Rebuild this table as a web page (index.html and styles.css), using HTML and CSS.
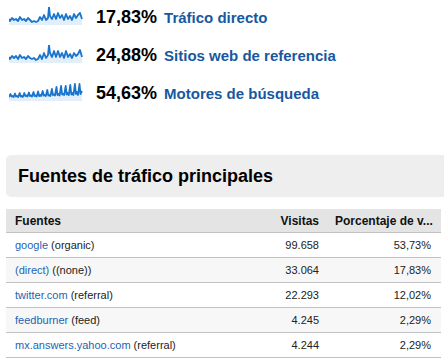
FILE: index.html
```html
<!DOCTYPE html>
<html lang="es">
<head>
<meta charset="utf-8">
<title>Fuentes de tráfico</title>
<link rel="stylesheet" href="styles.css">
</head>
<body>
<div class="summary">
  <div class="srow">
    <svg class="spark" width="74" height="18" viewBox="0 0 74 18">
      <polygon class="fill" points="0,12 1,14 3,11 5,13 7,12 9,14 11,10 13,13 15,12 17,14 19,11 21,13 23,15 25,14 27,15 29,14 31,10 33,13 35,8 37,13 39,11 40,0 41,9 43,12 45,7 47,12 49,6 51,11 53,8 55,13 57,7 59,12 61,9 63,13 65,7 67,11 69,8 71,6 73,12 73,18 0,18"/>
      <polyline class="line" points="0,12 1,14 3,11 5,13 7,12 9,14 11,10 13,13 15,12 17,14 19,11 21,13 23,15 25,14 27,15 29,14 31,10 33,13 35,8 37,13 39,11 40,0 41,9 43,12 45,7 47,12 49,6 51,11 53,8 55,13 57,7 59,12 61,9 63,13 65,7 67,11 69,8 71,6 73,12"/>
    </svg>
    <span class="pct">17,83%</span>
    <a class="label" href="#">Tráfico directo</a>
  </div>
  <div class="srow">
    <svg class="spark" width="74" height="18" viewBox="0 0 74 18">
      <polygon class="fill" points="0,12 1,14 3,11 5,13 7,11 9,14 11,10 13,13 15,12 17,14 19,11 21,13 23,14 25,13 27,15 29,14 31,10 33,14 35,8 37,13 39,10 40,0 41,8 43,12 45,6 47,12 49,6 51,12 53,8 55,13 57,6 59,12 61,9 63,13 65,8 67,11 69,9 71,5 73,12 73,18 0,18"/>
      <polyline class="line" points="0,12 1,14 3,11 5,13 7,11 9,14 11,10 13,13 15,12 17,14 19,11 21,13 23,14 25,13 27,15 29,14 31,10 33,14 35,8 37,13 39,10 40,0 41,8 43,12 45,6 47,12 49,6 51,12 53,8 55,13 57,6 59,12 61,9 63,13 65,8 67,11 69,9 71,5 73,12"/>
    </svg>
    <span class="pct">24,88%</span>
    <a class="label" href="#">Sitios web de referencia</a>
  </div>
  <div class="srow">
    <svg class="spark" width="74" height="18" viewBox="0 0 74 18">
      <polygon class="fill" points="0,14 1.5,11 2.5,13.5 3.5,13 4.6,14 6,10.5 7,13.5 8,13 9.2,14 10.7,10 11.7,13.5 12.7,13 13.8,14 15.3,10 16.3,13 17.3,12.5 18.4,13.5 19.9,9.5 20.9,13 21.9,12.5 23,13.5 24.5,9 25.5,13 26.5,12.5 27.6,13.5 29.1,8.5 30.1,13 31.1,12 32.2,13 33.7,8 34.7,12.5 35.7,12 36.8,13 38.3,7 39.3,12.5 40.3,12 41.4,13 42.9,6 43.9,12 44.9,11.5 46,12.5 47.5,4 48.5,12 49.5,11 50.6,12.5 52.1,3 53.1,11.5 54.1,11 55.2,12 56.7,3 57.7,11.5 58.7,10 59.8,12 61.3,2 62.3,11.5 63.3,10 64.4,12 65.9,1 66.9,11 67.9,9 69,12 70.5,1 71.5,11 73,8 73,18 0,18"/>
      <polyline class="line" points="0,14 1.5,11 2.5,13.5 3.5,13 4.6,14 6,10.5 7,13.5 8,13 9.2,14 10.7,10 11.7,13.5 12.7,13 13.8,14 15.3,10 16.3,13 17.3,12.5 18.4,13.5 19.9,9.5 20.9,13 21.9,12.5 23,13.5 24.5,9 25.5,13 26.5,12.5 27.6,13.5 29.1,8.5 30.1,13 31.1,12 32.2,13 33.7,8 34.7,12.5 35.7,12 36.8,13 38.3,7 39.3,12.5 40.3,12 41.4,13 42.9,6 43.9,12 44.9,11.5 46,12.5 47.5,4 48.5,12 49.5,11 50.6,12.5 52.1,3 53.1,11.5 54.1,11 55.2,12 56.7,3 57.7,11.5 58.7,10 59.8,12 61.3,2 62.3,11.5 63.3,10 64.4,12 65.9,1 66.9,11 67.9,9 69,12 70.5,1 71.5,11 73,8"/>
    </svg>
    <span class="pct">54,63%</span>
    <a class="label" href="#">Motores de búsqueda</a>
  </div>
</div>

<h2 class="panel-title">Fuentes de tráfico principales</h2>

<table class="sources">
  <thead>
    <tr>
      <th class="c-src">Fuentes</th>
      <th class="c-num">Visitas</th>
      <th class="c-pct">Porcentaje de v...</th>
    </tr>
  </thead>
  <tbody>
    <tr>
      <td class="c-src"><a href="#">google</a> (organic)</td>
      <td class="c-num">99.658</td>
      <td class="c-pct">53,73%</td>
    </tr>
    <tr class="alt">
      <td class="c-src"><a href="#">(direct)</a> ((none))</td>
      <td class="c-num">33.064</td>
      <td class="c-pct">17,83%</td>
    </tr>
    <tr>
      <td class="c-src"><a href="#">twitter.com</a> (referral)</td>
      <td class="c-num">22.293</td>
      <td class="c-pct">12,02%</td>
    </tr>
    <tr class="alt">
      <td class="c-src"><a href="#">feedburner</a> (feed)</td>
      <td class="c-num">4.245</td>
      <td class="c-pct">2,29%</td>
    </tr>
    <tr>
      <td class="c-src"><a href="#">mx.answers.yahoo.com</a> (referral)</td>
      <td class="c-num">4.244</td>
      <td class="c-pct">2,29%</td>
    </tr>
  </tbody>
</table>
</body>
</html>
```

FILE: styles.css
```css
html, body {
  margin: 0;
  padding: 0;
  background: #ffffff;
  overflow: hidden;
}

body {
  font-family: "Liberation Sans", Arial, sans-serif;
  color: #222222;
  width: 444px;
  height: 364px;
}

.summary {
  display: flex;
  flex-direction: column;
  gap: 4px;
  padding-left: 9px;
}

.srow {
  display: flex;
  align-items: center;
  height: 34px;
}

.spark {
  display: block;
  margin-right: 13px;
  margin-bottom: 3px;
}

.spark .fill {
  fill: #e2eef9;
  stroke: none;
}

.spark .line {
  fill: none;
  stroke: #1874cd;
  stroke-width: 1.8;
  stroke-linejoin: round;
}

.pct {
  font-size: 18px;
  font-weight: bold;
  color: #000000;
}

.label {
  margin-left: 7px;
  font-size: 15px;
  font-weight: bold;
  color: #17589f;
  text-decoration: none;
}

.panel-title {
  margin: 45px 0 0 6px;
  height: 42px;
  display: flex;
  align-items: center;
  padding-left: 12px;
  background: #eeeeee;
  border-radius: 5px 0 0 5px;
  font-size: 18px;
  font-weight: bold;
  color: #000000;
}

.sources {
  margin: 12px 0 0 6px;
  width: 435px;
  border-collapse: collapse;
  font-size: 11px;
  table-layout: fixed;
}

.sources th,
.sources td {
  white-space: nowrap;
  overflow: hidden;
}

.sources th {
  height: 23px;
  padding: 0;
  background: #e4e4e4;
  font-size: 12px;
  font-weight: bold;
  color: #111111;
  border-bottom: 1px solid #c2c2c2;
  vertical-align: middle;
}

.sources td {
  height: 24px;
  padding: 0;
  border-bottom: 1px solid #c2c2c2;
  vertical-align: middle;
  color: #222222;
}

.sources tr.alt td {
  background: #f7f7f7;
}

.sources .c-src {
  text-align: left;
  padding-left: 9px;
}

.sources .c-num {
  width: 49px;
  text-align: right;
  padding-right: 6px;
}

.sources .c-pct {
  width: 96px;
  text-align: right;
  padding-left: 10px;
  padding-right: 10px;
}

.sources a {
  color: #1d63b3;
  text-decoration: none;
}
```
